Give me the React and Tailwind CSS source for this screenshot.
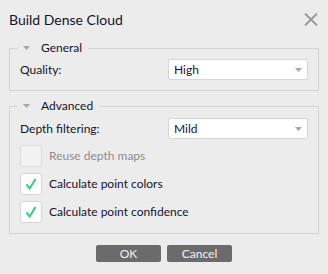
import React from 'react';

const Arrow = ({ className }) => (
    <svg width="7" height="4" viewBox="0 0 7 4" className={className}>
        <polygon points="0,0 7,0 3.5,4" fill="currentColor" />
    </svg>
);

const Combo = ({ value }) => (
    <div className="w-[140px] h-[21px] bg-white border border-[#d6d6d6] rounded-[2px] flex items-center justify-between pl-[5px] pr-[5px]">
        <span className="text-[#14143a]">{value}</span>
        <Arrow className="text-[#a6a6a6]" />
    </div>
);

const Check = ({ label, checked, disabled }) => (
    <div className="flex items-center gap-[7px] h-[22px]">
        <div
            className={`w-[22px] h-[22px] rounded-[3px] border flex items-center justify-center ${disabled ? 'bg-[#f2f2f2] border-[#dcdcdc]' : 'bg-white border-[#d6d6d6]'}`}
        >
            {checked && (
                <svg width="22" height="22" viewBox="0 0 22 22">
                    <polyline points="6,11.5 9.5,16 16,5.5" fill="none" stroke="#33cf6a" strokeWidth="2.2" />
                </svg>
            )}
        </div>
        <span className={disabled ? 'text-[#8c8c8c]' : 'text-[#14142a]'}>{label}</span>
    </div>
);

const Group = ({ title, className, children }) => (
    <fieldset className={`mx-[9px] border border-[#d3d3d3] px-[7px] ${className}`}>
        <legend className="h-[16px] px-[6px] flex items-center">
            <Arrow className="text-[#a8a8a8]" />
            <span className="ml-[11px] leading-[16px] text-[#14142a]">{title}</span>
        </legend>
        <div className="px-[3px]">{children}</div>
    </fieldset>
);

export default function App() {
    return (
        <div className="w-[328px] h-[274px] bg-[#ececec] flex flex-col text-[12px] font-['Lato',Arial,sans-serif]">
            <div className="h-[40px] flex items-start justify-between pl-[9px] pr-[10px] pt-[10px]">
                <h1 className="text-[14px] leading-[20px] text-[#14142a]">Build Dense Cloud</h1>
                <svg width="14" height="13" viewBox="0 0 14 13" className="mt-[3px]">
                    <path d="M1 0.5 L13 12.5 M13 0.5 L1 12.5" stroke="#959595" strokeWidth="1.8" />
                </svg>
            </div>

            <Group title="General" className="pb-[10px]">
                <div className="mt-[3px] flex items-center justify-between">
                    <span className="text-[#14142a]">Quality:</span>
                    <Combo value="High" />
                </div>
            </Group>

            <Group title="Advanced" className="mt-[7px] pb-[10px]">
                <div className="mt-[4px] flex items-center justify-between">
                    <span className="text-[#14142a]">Depth filtering:</span>
                    <Combo value="Mild" />
                </div>
                <div className="mt-[6px] flex flex-col gap-[6px]">
                    <Check label="Reuse depth maps" disabled />
                    <Check label="Calculate point colors" checked />
                    <Check label="Calculate point confidence" checked />
                </div>
            </Group>

            <div className="mt-[11px] flex justify-center gap-[6px]">
                <button className="w-[65px] h-[17px] rounded-[2px] bg-[#6b6b6b] text-[#f2f2f2] leading-[17px]">OK</button>
                <button className="w-[65px] h-[17px] rounded-[2px] bg-[#6b6b6b] text-[#f2f2f2] leading-[17px]">Cancel</button>
            </div>
        </div>
    );
}
